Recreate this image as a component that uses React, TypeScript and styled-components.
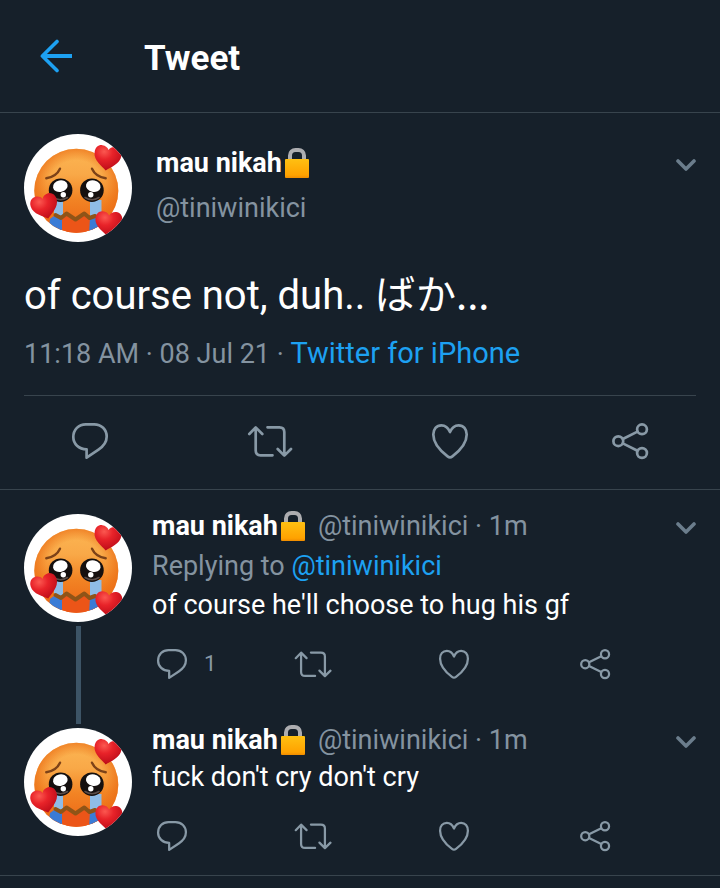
import React, { useId } from "react";
import styled, { createGlobalStyle } from "styled-components";

const color = {
  background: "#16202a",
  line: "#38444d",
  thread: "#3d5466",
  text: "#ffffff",
  muted: "#8493a0",
  icon: "#8899a6",
  chevron: "#6b7d8c",
  accent: "#1da1f2",
};

const GlobalStyle = createGlobalStyle`
  *, *::before, *::after { box-sizing: border-box; }
  html { background: ${color.background}; }
  body {
    margin: 0;
    background: ${color.background};
    color: ${color.text};
    font-family: Roboto, "Noto Sans CJK JP", sans-serif;
    font-size: 27px;
    line-height: 36px;
  }
`;

const Page = styled.main`
  min-height: 100vh;
`;

const TopBar = styled.header`
  display: flex;
  align-items: center;
  gap: 70px;
  height: 113px;
  padding: 0 40px;
  border-bottom: 1px solid ${color.line};
`;

const Title = styled.h1`
  margin: 0;
  padding-top: 6px;
  font-size: 35px;
  line-height: 44px;
  font-weight: 700;
`;

const IconButton = styled.button`
  display: flex;
  align-items: center;
  gap: 12px;
  padding: 0;
  border: 0;
  background: none;
  color: ${color.icon};
  font: inherit;
  font-size: 22px;
  cursor: pointer;
`;

const BackButton = styled(IconButton)`
  color: ${color.accent};
`;

const MenuButton = styled(IconButton)`
  height: 36px;
  margin-left: auto;
  padding-top: 4px;
  color: ${color.chevron};
`;

const Focused = styled.article`
  border-bottom: 1px solid ${color.line};
`;

const FocusedContent = styled.div`
  margin: 0 24px;
  padding: 21px 0 23px;
  border-bottom: 1px solid ${color.line};
`;

const AuthorRow = styled.div`
  display: flex;
  align-items: flex-start;
  gap: 24px;
`;

const AuthorNames = styled.div`
  display: flex;
  flex: 1;
  flex-direction: column;
  gap: 9px;
  padding-top: 11px;
`;

const NameLine = styled.div`
  display: flex;
  align-items: center;
`;

const Name = styled.span`
  display: inline-flex;
  align-items: center;
  gap: 3px;
  margin-right: 13px;
  font-weight: 700;
`;

const Muted = styled.span`
  color: ${color.muted};
`;

const Link = styled.a`
  color: ${color.accent};
  text-decoration: none;
`;

const SourceLink = styled(Link)`
  font-size: 29px;
`;

const FocusedText = styled.p`
  margin: 26px 0 15px;
  font-size: 40px;
  line-height: 48px;
`;

const Japanese = styled.span`
  font-family: "Noto Sans CJK JP", sans-serif;
`;

const Meta = styled.p`
  margin: 0;
  color: ${color.muted};
`;

const FocusedActions = styled.div`
  display: grid;
  grid-template-columns: repeat(4, 1fr);
  justify-items: center;
  padding: 21px 0 24px;
`;

const Thread = styled.section`
  padding: 24px 0 0;
  border-bottom: 1px solid ${color.line};
`;

const Reply = styled.article`
  display: flex;
  gap: 20px;
  padding-left: 24px;
`;

const AvatarColumn = styled.div`
  display: flex;
  flex-direction: column;
  align-items: center;
`;

const ThreadLine = styled.div`
  flex: 1;
  width: 5px;
  margin: 4px 0;
  background: ${color.thread};
`;

const ReplyBody = styled.div<{ $last?: boolean }>`
  flex: 1;
  padding-bottom: ${(p) => (p.$last ? 19 : 44)}px;
`;

const ReplyHead = styled(NameLine)`
  height: 28px;
  padding: 0 24px 4px 0;
`;

const ReplyContext = styled.p`
  margin: 6px 0 0;
  color: ${color.muted};
`;

const ReplyText = styled.p`
  margin: 3px 0 0;
`;

const ReplyActions = styled.div`
  display: grid;
  grid-template-columns: repeat(4, 1fr);
  margin-top: 21px;
  padding-right: 4px;
`;

const Svg = styled.svg`
  display: block;
  flex: none;
`;

type IconName = "reply" | "retweet" | "like" | "share";

const shapes: Record<IconName, React.ReactNode> = {
  reply: (
    <path d="M20.6 32.3C12.8 32.1 7.3 27 7.3 20C7.3 12.6 12.7 7.3 19.8 7.3H28.2C35.3 7.3 40.7 12.6 40.7 19.6C40.7 25 37.4 29.4 32.5 32.7L20.6 40.7Z" />
  ),
  retweet: (
    <path d="M3.3 17L9.7 10.4L16.3 17M9.7 10.8V33.5C9.7 36.6 11.4 38.3 14.5 38.3H26.5M21.5 10.3H33.5C36.6 10.3 38.3 12 38.3 15V38.4M31.7 32L38.3 38.6L45 32" />
  ),
  like: (
    <path d="M24 15C22.2 10.8 19 8.3 15.4 8.3C10.5 8.3 7.3 12.2 7.3 17.6C7.3 27.3 16.8 35.8 21.6 39.4C23.2 40.6 24.8 40.6 26.4 39.4C31.2 35.8 40.7 27.3 40.7 17.6C40.7 12.2 37.5 8.3 32.6 8.3C29 8.3 25.8 10.8 24 15Z" />
  ),
  share: (
    <>
      <circle cx="12.3" cy="24.2" r="4.9" />
      <circle cx="36" cy="12.3" r="4.9" />
      <circle cx="36" cy="36" r="4.9" />
      <path d="M16.8 22L31.5 14.6M16.8 26.4L31.5 33.7" />
    </>
  ),
};

function ActionIcon({ name, size }: { name: IconName; size: number }) {
  return (
    <Svg
      width={size}
      height={size}
      viewBox="0 0 48 48"
      fill="none"
      stroke="currentColor"
      strokeWidth="2.7"
      strokeLinecap="round"
      strokeLinejoin="round"
      aria-hidden="true"
    >
      {shapes[name]}
    </Svg>
  );
}

function Actions({ size, replies }: { size: number; replies?: number }) {
  return (
    <>
      <IconButton aria-label="Reply">
        <ActionIcon name="reply" size={size} />
        {replies}
      </IconButton>
      <IconButton aria-label="Retweet">
        <ActionIcon name="retweet" size={size} />
      </IconButton>
      <IconButton aria-label="Like">
        <ActionIcon name="like" size={size} />
      </IconButton>
      <IconButton aria-label="Share">
        <ActionIcon name="share" size={size} />
      </IconButton>
    </>
  );
}

function BackArrow() {
  return (
    <Svg width="34" height="34" viewBox="0 0 34 34" fill="none" stroke="currentColor" strokeWidth="3.6" aria-hidden="true">
      <path d="M17 2.4L2.4 17L17 31.6" strokeLinecap="round" strokeLinejoin="round" />
      <path d="M3 17H32" strokeWidth="4" />
    </Svg>
  );
}

function Menu() {
  return (
    <MenuButton aria-label="More options">
      <Svg width="20" height="14" viewBox="0 0 20 14" fill="none" stroke="currentColor" strokeWidth="3.6" strokeLinecap="round" strokeLinejoin="round" aria-hidden="true">
        <path d="M2 3L10 11L18 3" />
      </Svg>
    </MenuButton>
  );
}

function Lock() {
  const id = useId();
  return (
    <Svg width="24" height="30" viewBox="0 0 24 30" role="img" aria-label="locked">
      <defs>
        <linearGradient id={id} x1="0" y1="0" x2="0" y2="1">
          <stop offset="0" stopColor="#ffc012" />
          <stop offset="0.85" stopColor="#ffa200" />
          <stop offset="1" stopColor="#f08c00" />
        </linearGradient>
      </defs>
      <path d="M5 13V7.5C5 4 7.5 2 10.5 2H13.5C16.5 2 19 4 19 7.5V13" fill="none" stroke="#adadb0" strokeWidth="4" />
      <rect x="0" y="11" width="24" height="19" rx="1" fill={`url(#${id})`} />
    </Svg>
  );
}

const heartPath =
  "M0 12.5C-4 9-13.5 4-13.5-4C-13.5-9-10.5-12-6.8-12C-3.6-12-1-10.5 0-8C1-10.5 3.6-12 6.8-12C10.5-12 13.5-9 13.5-4C13.5 4 4 9 0 12.5Z";

function Avatar() {
  const id = useId();
  const face = `${id}face`;
  const rim = `${id}rim`;
  const heart = `${id}heart`;
  const disc = `${id}disc`;
  const round = `${id}round`;
  const url = (name: string) => `url(#${name})`;
  return (
    <Svg width="108" height="108" viewBox="0 0 108 108" role="img" aria-label="mau nikah">
      <defs>
        <linearGradient id={face} x1="0" y1="0" x2="0" y2="1">
          <stop offset="0" stopColor="#fcb653" />
          <stop offset="0.3" stopColor="#f9a948" />
          <stop offset="0.6" stopColor="#f28424" />
          <stop offset="1" stopColor="#ec6314" />
        </linearGradient>
        <radialGradient id={rim} cx="0.5" cy="0.5" r="0.5">
          <stop offset="0.72" stopColor="#ea6a12" stopOpacity="0" />
          <stop offset="1" stopColor="#ea6a12" stopOpacity="0.65" />
        </radialGradient>
        <radialGradient id={heart} cx="0.35" cy="0.25" r="0.8">
          <stop offset="0" stopColor="#fb5850" />
          <stop offset="0.4" stopColor="#e82329" />
          <stop offset="1" stopColor="#b90a17" />
        </radialGradient>
        <clipPath id={disc}>
          <circle cx="54" cy="54" r="54" />
        </clipPath>
        <clipPath id={round}>
          <circle cx="52.3" cy="56.7" r="42" />
        </clipPath>
      </defs>
      <g clipPath={url(disc)}>
        <rect width="108" height="108" fill="#fff" />
        <circle cx="52.3" cy="56.7" r="42" fill={url(face)} />
        <circle cx="52.3" cy="56.7" r="42" fill={url(rim)} />
        <g clipPath={url(round)}>
          <path d="M31 81L37 85L42 80L51.3 86L60.3 80L66 85L74 82V100H31Z" fill="#ec5518" />
          <path d="M30 82L38 85V100H24L26 85Z" fill="#3b7bd6" />
          <path d="M30 66H39V83L37 84L30 81Z" fill="#8fbce6" />
          <path d="M66 84L74 82L80 85V100H65Z" fill="#3b7bd6" />
          <path d="M66 66H77.5V82L66 84Z" fill="#8fbce6" />
        </g>
        <path d="M31.5 81L37 84L42.5 79.5L51.5 85.5L60.3 79.5L65.5 84L71 82" fill="none" stroke="#8f5417" strokeWidth="4" strokeLinejoin="round" strokeLinecap="round" />
        <path d="M22.3 44.3Q32.5 42.5 36 34.7M68 34.7Q71.5 42.5 81.7 44.3" fill="none" stroke="#7d4218" strokeWidth="2.4" strokeLinecap="round" />
        <circle cx="36.6" cy="56.2" r="11.8" fill="#15100f" />
        <circle cx="67.9" cy="56.2" r="11.8" fill="#15100f" />
        <path d="M29.5 63.5Q36.5 68 43.5 63.5M61 63.5Q68 68 75 63.5" fill="none" stroke="#5a4c48" strokeWidth="1.6" strokeLinecap="round" />
        <ellipse cx="36.3" cy="52.2" rx="7.4" ry="5.8" fill="#fff" transform="rotate(-12 36.3 52.2)" />
        <ellipse cx="69.3" cy="52.2" rx="7.4" ry="5.8" fill="#fff" transform="rotate(12 69.3 52.2)" />
        <circle cx="39.3" cy="60.8" r="2.7" fill="#fff" />
        <circle cx="66.8" cy="60.8" r="2.7" fill="#fff" />
        <path d={heartPath} fill={url(heart)} transform="translate(83.4 24) rotate(8)" />
        <path d={heartPath} fill={url(heart)} transform="translate(20.8 72.6) rotate(-16)" />
        <path d={heartPath} fill={url(heart)} transform="translate(84.6 89.6) rotate(4)" />
      </g>
    </Svg>
  );
}

interface ReplyProps {
  text: string;
  replyingTo?: string;
  replies?: number;
  last?: boolean;
}

function ReplyTweet({ text, replyingTo, replies, last }: ReplyProps) {
  return (
    <Reply>
      <AvatarColumn>
        <Avatar />
        {!last && <ThreadLine />}
      </AvatarColumn>
      <ReplyBody $last={last}>
        <ReplyHead>
          <Name>
            mau nikah
            <Lock />
          </Name>
          <Muted>@tiniwinikici · 1m</Muted>
          <Menu />
        </ReplyHead>
        {replyingTo && (
          <ReplyContext>
            Replying to <Link href="#profile">{replyingTo}</Link>
          </ReplyContext>
        )}
        <ReplyText>{text}</ReplyText>
        <ReplyActions>
          <Actions size={40} replies={replies} />
        </ReplyActions>
      </ReplyBody>
    </Reply>
  );
}

export default function App() {
  return (
    <Page>
      <GlobalStyle />
      <TopBar>
        <BackButton aria-label="Back">
          <BackArrow />
        </BackButton>
        <Title>Tweet</Title>
      </TopBar>
      <Focused>
        <FocusedContent>
          <AuthorRow>
            <Avatar />
            <AuthorNames>
              <NameLine>
                <Name>
                  mau nikah
                  <Lock />
                </Name>
                <Menu />
              </NameLine>
              <Muted>@tiniwinikici</Muted>
            </AuthorNames>
          </AuthorRow>
          <FocusedText>
            of course not, duh.. <Japanese lang="ja">ばか...</Japanese>
          </FocusedText>
          <Meta>
            11:18 AM · 08 Jul 21 · <SourceLink href="#source">Twitter for iPhone</SourceLink>
          </Meta>
        </FocusedContent>
        <FocusedActions>
          <Actions size={48} />
        </FocusedActions>
      </Focused>
      <Thread>
        <ReplyTweet replyingTo="@tiniwinikici" text="of course he'll choose to hug his gf" replies={1} />
        <ReplyTweet text="fuck don't cry don't cry" last />
      </Thread>
    </Page>
  );
}
